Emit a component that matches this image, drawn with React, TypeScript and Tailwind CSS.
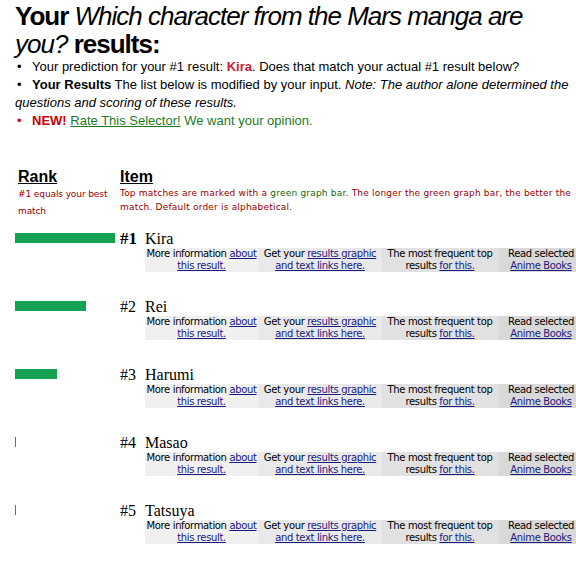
const rows = [
  { rank: 1, name: 'Kira', bar: 100 },
  { rank: 2, name: 'Rei', bar: 71 },
  { rank: 3, name: 'Harumi', bar: 42 },
  { rank: 4, name: 'Masao', bar: 1 },
  { rank: 5, name: 'Tatsuya', bar: 1 },
];

function InfoCells() {
  const link = 'text-[#1a1a80] underline';
  return (
    <div className="flex text-[10px] leading-[12px] text-black font-['DejaVu_Sans',Verdana,sans-serif] tracking-[-0.35px]">
      <div className="w-[113px] shrink-0 bg-[#f0f0f0] text-center">
        More information <span className={link}>about</span>
        <br />
        <span className={link}>this result.</span>
      </div>
      <div className="w-[124px] shrink-0 bg-[#e9e9e9] text-center">
        Get your <span className={link}>results graphic</span>
        <br />
        <span className={link}>and text links here.</span>
      </div>
      <div className="w-[116px] shrink-0 bg-[#e1e1e1] text-center">
        The most frequent top
        <br />
        results <span className={link}>for this.</span>
      </div>
      <div className="w-[86px] shrink-0 bg-[#d9d9d9] text-center">
        Read selected
        <br />
        <span className={link}>Anime Books</span>
      </div>
    </div>
  );
}

function Dot({ className = '' }: { className?: string }) {
  return <span className={`inline-block w-[17px] pl-[2px] ${className}`}>•</span>;
}

export default function App() {
  return (
    <div className="w-[576px] h-[562px] overflow-hidden bg-white pl-[15px] font-['Liberation_Sans',Arial,sans-serif] text-black">
      <h1 className="pt-[2px] text-[26px] leading-[28px] tracking-[-1px] font-normal">
        <b>Your</b> <i>Which character from the Mars manga are you?</i> <b>results:</b>
      </h1>

      <div className="text-[13px] leading-[18px]">
        <p>
          <Dot />
          Your prediction for your #1 result: <b className="text-[#cc2233]">Kira</b>. Does that match
          your actual #1 result below?
        </p>
        <p>
          <Dot />
          <b>Your Results</b> The list below is modified by your input.{' '}
          <i>Note: The author alone determined the questions and scoring of these results.</i>
        </p>
        <p className="text-[#1f7a1f]">
          <Dot className="text-[#cc0000]" />
          <b className="text-[#cc0000]">NEW!</b> <span className="underline">Rate This Selector!</span>{' '}
          We want your opinion.
        </p>
      </div>

      <div className="mt-[38px] flex">
        <div className="w-[105px] shrink-0 pl-[3px]">
          <div className="text-[16px] leading-[18px] font-bold underline">Rank</div>
          <div className="text-[9px] leading-[17px] text-[#990000] font-['DejaVu_Sans',Verdana,sans-serif] tracking-[-0.1px]">
            #1 equals your best match
          </div>
        </div>
        <div className="flex-1">
          <div className="text-[16px] leading-[18px] font-bold underline">Item</div>
          <div className="text-[9px] leading-[14px] text-[#990000] font-['DejaVu_Sans',Verdana,sans-serif] tracking-[0.2px]">
            Top matches are marked with a <span className="text-[#116611]">green graph bar</span>. The
            longer the green graph bar, the better the match. Default order is alphabetical.
          </div>
        </div>
      </div>

      <div className="mt-[9px]">
        {rows.map((r) => (
          <div key={r.rank} className="flex h-[68px]">
            <div className="w-[105px] shrink-0 pt-[4px]">
              <div className="h-[10px] bg-[#12a150]" style={{ width: r.bar }} />
            </div>
            <div className="flex-1">
              <div className="flex h-[19px] items-center font-['Liberation_Serif','Times_New_Roman',serif] text-[16px] leading-[19px]">
                <span className={`w-[25px] shrink-0 ${r.rank === 1 ? 'font-bold text-[17px]' : ''}`}>#{r.rank}</span>
                <span>{r.name}</span>
              </div>
              <div className="ml-[25px]">
                <InfoCells />
              </div>
            </div>
          </div>
        ))}
      </div>
    </div>
  );
}
